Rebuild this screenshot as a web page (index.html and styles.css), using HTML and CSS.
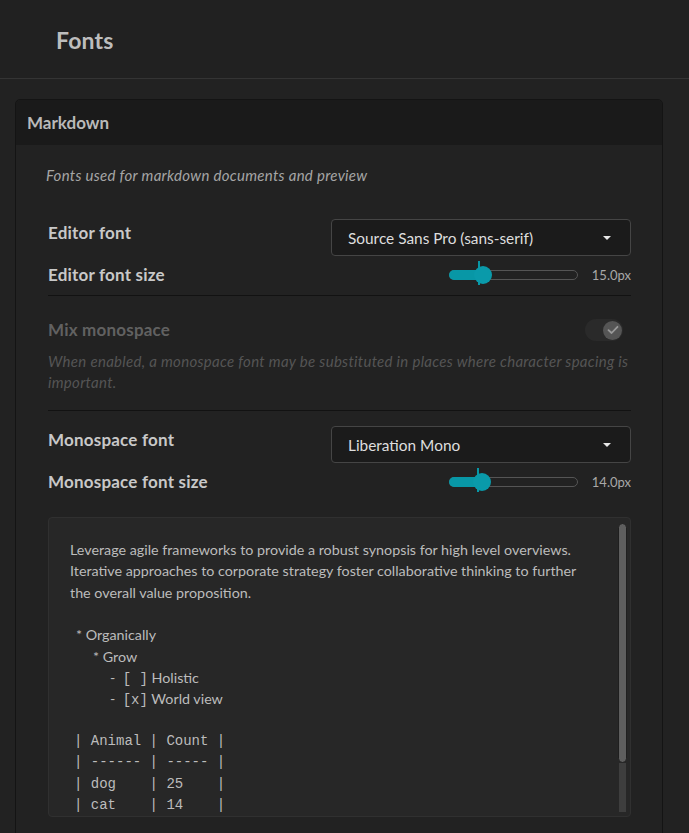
FILE: index.html
```html
<!DOCTYPE html>
<html>
<head>
<meta charset="utf-8">
<link rel="stylesheet" href="styles.css">
</head>
<body>
<header class="page-header">
  <h1 class="page-title">Fonts</h1>
</header>
<main class="page-body">
  <section class="card">
    <div class="card-header">Markdown</div>
    <div class="card-body">
      <p class="desc">Fonts used for markdown documents and preview</p>

      <div class="setting-row first">
        <div class="label">Editor font</div>
        <div class="select">
          <span class="select-text">Source Sans Pro (sans-serif)</span>
          <span class="caret"></span>
        </div>
      </div>
      <div class="slider-row">
        <div class="label">Editor font size</div>
        <div class="slider-wrap">
          <div class="slider">
            <div class="slider-fill" style="width:34px"></div>
            <div class="slider-tick" style="left:28px"></div>
            <div class="slider-thumb" style="left:24px"></div>
          </div>
          <span class="slider-value">15.0px</span>
        </div>
      </div>
      <div class="sep"></div>

      <div class="toggle-block">
        <div class="toggle-row">
          <div class="label disabled">Mix monospace</div>
          <div class="toggle">
            <div class="toggle-knob">
              <svg width="12" height="10" viewBox="0 0 12 10"><path d="M1.5 5.2 L4.6 8 L10.5 1.8" fill="none" stroke="#9a9a9a" stroke-width="1.8" stroke-linecap="round" stroke-linejoin="round"/></svg>
            </div>
          </div>
        </div>
        <p class="help">When enabled, a monospace font may be substituted in places where character spacing is important.</p>
      </div>
      <div class="sep"></div>

      <div class="setting-row second">
        <div class="label">Monospace font</div>
        <div class="select">
          <span class="select-text">Liberation Mono</span>
          <span class="caret"></span>
        </div>
      </div>
      <div class="slider-row">
        <div class="label">Monospace font size</div>
        <div class="slider-wrap">
          <div class="slider">
            <div class="slider-fill" style="width:32px"></div>
            <div class="slider-tick" style="left:27px"></div>
            <div class="slider-thumb" style="left:23px"></div>
          </div>
          <span class="slider-value">14.0px</span>
        </div>
      </div>

      <div class="preview">
        <div class="preview-content">
          <div class="line">Leverage agile frameworks to provide a robust synopsis for high level overviews.</div>
          <div class="line">Iterative approaches to corporate strategy foster collaborative thinking to further</div>
          <div class="line">the overall value proposition.</div>
          <div class="line blank"></div>
          <div class="line ind1">* Organically</div>
          <div class="line ind2">* Grow</div>
          <div class="line ind3">-&nbsp;&nbsp;<span class="mono">[ ]</span> Holistic</div>
          <div class="line ind3">-&nbsp;&nbsp;<span class="mono">[x]</span> World view</div>
          <div class="line blank"></div>
          <div class="line mono tbl">| Animal | Count |</div>
          <div class="line mono tbl">| ------ | ----- |</div>
          <div class="line mono tbl">| dog    | 25    |</div>
          <div class="line mono tbl">| cat    | 14    |</div>
        </div>
        <div class="scrollbar">
          <div class="scroll-thumb"></div>
          <div class="scroll-track"></div>
        </div>
      </div>
    </div>
  </section>
</main>
</body>
</html>
```

FILE: styles.css
```css
* { box-sizing: border-box; }
html, body {
  margin: 0;
  padding: 0;
  background: #222222;
  font-family: Lato, "Open Sans", sans-serif;
  color: #c4c4c4;
  height: 100%;
  overflow: hidden;
}
.page-header {
  height: 79px;
  background: #212121;
  border-bottom: 1px solid #343434;
  padding: 0 0 0 56px;
  display: flex;
  align-items: center;
}
.page-title {
  margin: 0;
  font-size: 23px;
  font-weight: 700;
  letter-spacing: 0.2px;
  color: #bdbdbd;
  position: relative;
  top: 1px;
}
.page-body {
  padding: 20px 26px 0 15px;
}
.card {
  border: 1px solid #141414;
  border-radius: 5px;
  background: #222222;
  overflow: hidden;
  height: 760px;
}
.card-header {
  height: 45px;
  background: #1a1a1a;
  padding: 0 0 0 11px;
  display: flex;
  align-items: center;
  font-size: 17px;
  font-weight: 700;
  color: #b9b9b9;
}
.card-body {
  padding: 20px 31px 0 32px;
}
.desc {
  margin: 0 0 0 -2px;
  font-size: 15px;
  letter-spacing: 0.3px;
  line-height: 20px;
  font-style: italic;
  color: #a6a6a6;
}
.label {
  font-size: 17px;
  letter-spacing: 0.2px;
  font-weight: 700;
  line-height: 20px;
  color: #c8c8c8;
}
.label.disabled { color: #616161; }
.setting-row {
  display: flex;
  justify-content: space-between;
  align-items: flex-start;
}
.setting-row .label { padding-top: 4px; }
.setting-row.first { margin-top: 34px; }
.setting-row.second { margin-top: 15px; }
.select {
  width: 300px;
  height: 37px;
  background: #1b1b1b;
  border: 1px solid #454545;
  border-radius: 4px;
  display: flex;
  align-items: center;
  justify-content: space-between;
  padding: 0 19px 0 16px;
}
.select-text {
  font-size: 15.4px;
  color: #dedede;
}
.caret {
  width: 0;
  height: 0;
  border-left: 4px solid transparent;
  border-right: 4px solid transparent;
  border-top: 4px solid #e8e8e8;
  margin-top: 1px;
}
.slider-row {
  margin-top: 6px;
  height: 26px;
  display: flex;
  justify-content: space-between;
  align-items: center;
}
.slider-wrap {
  display: flex;
  align-items: center;
}
.slider {
  position: relative;
  width: 129px;
  height: 10px;
  border: 1px solid #555555;
  border-radius: 5px;
}
.slider-fill {
  position: absolute;
  left: -1px;
  top: -1px;
  height: 10px;
  background: #0897a6;
  border-radius: 5px 0 0 5px;
}
.slider-tick {
  position: absolute;
  top: -10px;
  width: 2px;
  height: 24px;
  background: #0897a6;
}
.slider-thumb {
  position: absolute;
  top: -5px;
  width: 18px;
  height: 18px;
  border-radius: 50%;
  background: #0a9aaa;
}
.slider-value {
  margin-left: 12px;
  width: 41px;
  text-align: right;
  font-size: 13px;
  color: #a8a8a8;
}
.sep {
  margin-top: 7px;
  height: 1px;
  background: #121212;
}
.toggle-block { padding-top: 23px; }
.toggle-row {
  display: flex;
  justify-content: space-between;
  align-items: center;
}
.toggle {
  width: 38px;
  height: 22px;
  border-radius: 11px;
  background: #2a2a2a;
  display: flex;
  align-items: center;
  justify-content: flex-end;
  padding-right: 1px;
  margin-right: 8px;
}
.toggle-knob {
  width: 19px;
  height: 19px;
  border-radius: 50%;
  background: #555555;
  display: flex;
  align-items: center;
  justify-content: center;
}
.help {
  margin: 10px 0 17px;
  font-size: 15px;
  letter-spacing: 0.3px;
  line-height: 21px;
  font-style: italic;
  color: #555555;
}
.preview {
  margin-top: 22px;
  height: 300px;
  background: #272727;
  border: 1px solid #303030;
  border-radius: 4px;
  display: flex;
  overflow: hidden;
}
.preview-content {
  flex: 1;
  padding: 21px 0 0 21px;
  overflow: hidden;
}
.line {
  font-size: 14.3px;
  line-height: 21.33px;
  height: 21.33px;
  color: #bcbcbc;
  white-space: pre;
}
.mono {
  font-family: "Liberation Mono", monospace;
  font-size: 14px;
}
.ind1 { padding-left: 6px; }
.ind2 { padding-left: 23px; }
.ind3 { padding-left: 40px; }
.tbl { padding-left: 4px; }
.scrollbar {
  width: 8px;
  margin: 5px 4px 4px 0;
  display: flex;
  flex-direction: column;
  align-items: center;
}
.scroll-thumb {
  width: 9px;
  height: 240px;
  background: #5e5e5e;
  border-radius: 5px;
  border: 1px solid #1f1f1f;
}
.scroll-track {
  width: 7px;
  flex: 1;
  background: #3e3e3e;
}
```
